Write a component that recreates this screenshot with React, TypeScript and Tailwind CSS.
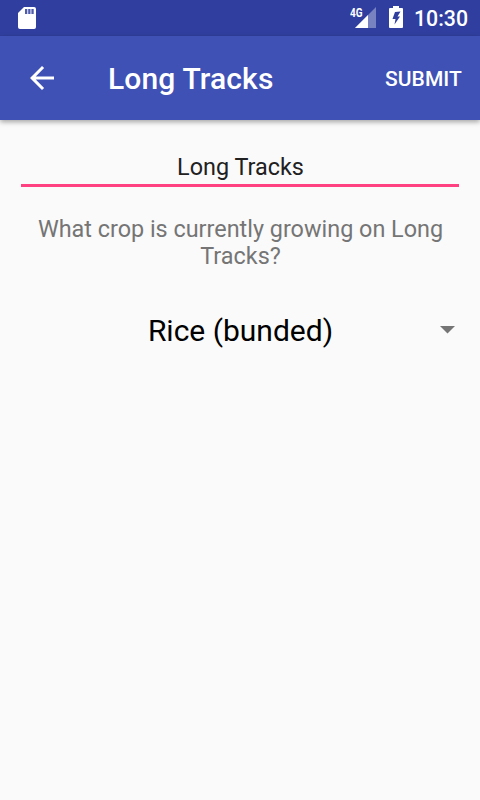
function StatusBar() {
  return (
    <div className="flex h-9 items-center bg-[#303f9f] pl-[18px] pr-[12px] text-white">
      <svg width="18" height="22" viewBox="0 0 18 22" className="shrink-0">
        <path fill="currentColor" d="M6 0H16a2 2 0 0 1 2 2v18a2 2 0 0 1-2 2H2a2 2 0 0 1-2-2V6z" />
        <path fill="#303f9f" fillOpacity="0.85" d="M7 2h2.300v5H7zm3.200 0h2.300v5h-2.300zm3.200 0h2.300v5h-2.300z" />
      </svg>
      <svg width="27" height="30" viewBox="0 -4 27 30" className="ml-auto shrink-0">
        <path fill="currentColor" fillOpacity="0.35" d="M26 0v21H5z" />
        <path fill="currentColor" d="M18 8v13H5z" />
        <text x="0" y="10" fill="currentColor" fontFamily="Roboto" fontSize="12.500" fontWeight="700" textLength="12.500" lengthAdjust="spacingAndGlyphs">4G</text>
      </svg>
      <svg width="14" height="22" viewBox="0 0 14 22" className="-mt-0.5 ml-[12px] shrink-0">
        <path fill="currentColor" fillRule="evenodd" d="M4 0h6v2h3a1 1 0 0 1 1 1v18a1 1 0 0 1-1 1H1a1 1 0 0 1-1-1V3a1 1 0 0 1 1-1h3zM6 6L3.500 13h3L5.500 18.500 11 10.500H8.500L11.500 5.500z" />
      </svg>
      <span className="mt-0.5 ml-[11px] text-[21.300px] font-medium leading-none">10:30</span>
    </div>
  );
}

function AppBar() {
  return (
    <div className="flex h-[84px] items-center bg-[#3f51b5] px-[18px] text-white shadow-[0_2px_5px_rgba(0,0,0,0.35)]">
      <svg width="36" height="36" viewBox="0 0 24 24" className="ml-[6px] shrink-0">
        <path fill="currentColor" d="M20 11H7.830l5.590-5.590L12 4l-8 8 8 8 1.410-1.410L7.830 13H20v-2z" />
      </svg>
      <h1 className="ml-[48px] pt-0.5 text-[30px] font-medium leading-none tracking-[0.14px]">Long Tracks</h1>
      <button className="ml-auto pt-0.5 text-[21px] font-medium leading-none tracking-[0.1px]">SUBMIT</button>
    </div>
  );
}

export default function App() {
  return (
    <div className="flex h-[800px] w-[480px] flex-col overflow-hidden bg-[#fafafa] font-['Roboto','Noto_Sans',sans-serif]">
      <StatusBar />
      <AppBar />
      <main className="flex flex-col px-[21px] pt-[32px]">
        <div className="h-[35px] border-b-[3px] border-[#ff4081] pl-px text-center text-[23.400px] leading-[30px] text-[#212121]">
          Long Tracks
        </div>
        <p className="mt-[29px] pl-px text-center text-[23.400px] leading-[27px] text-[#757575]">
          What crop is currently growing on Long<br />Tracks?
        </p>
        <div className="mt-[41px] flex h-[40px] items-center pr-1">
          <span className="ml-[20px] flex-1 text-center text-[30px] leading-none text-black">Rice (bunded)</span>
          <svg width="15" height="10" viewBox="0 0 15 10" className="shrink-0">
            <path fill="#757575" d="M0 0h15L7.500 7.500z" />
          </svg>
        </div>
      </main>
    </div>
  );
}
